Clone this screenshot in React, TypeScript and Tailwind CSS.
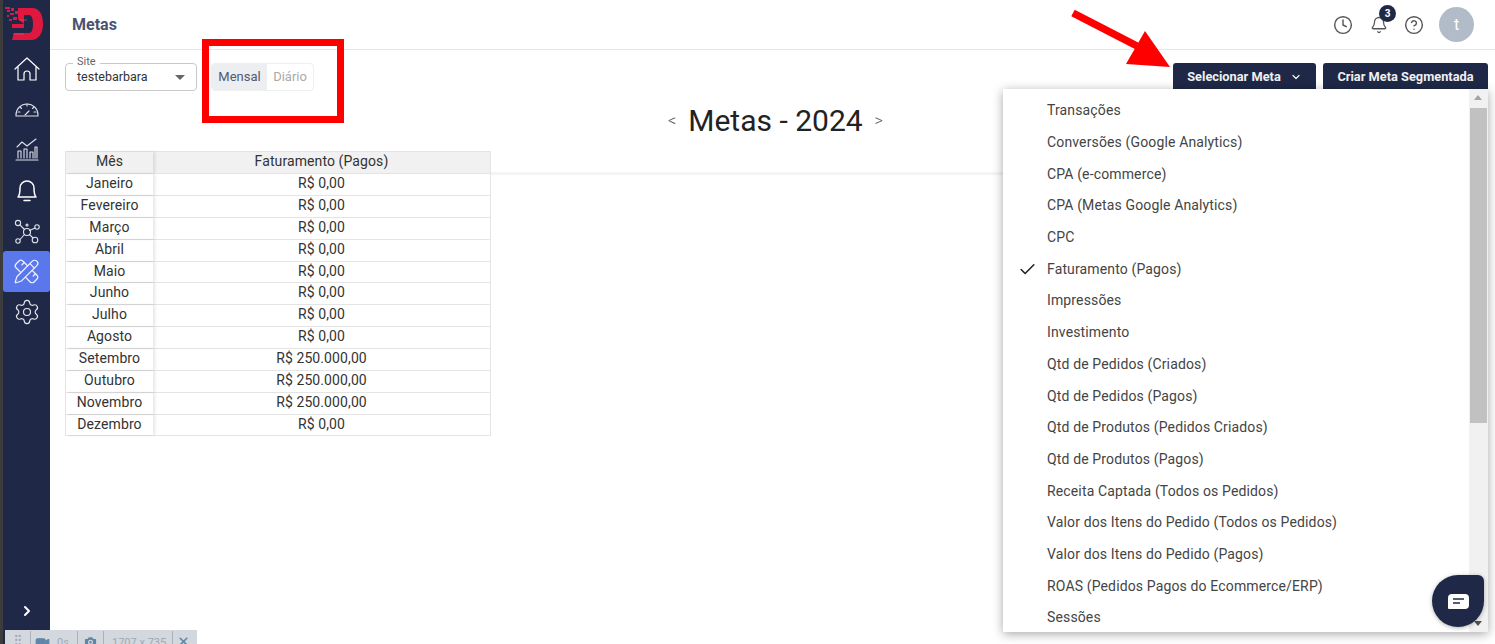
import { ChevronDown, ChevronRight, Check, Clock, Bell, CircleHelp, GripVertical, Video, Camera, X, PencilRuler, Settings } from "lucide-react";

const MONTHS: [string, string][] = [
  ["Janeiro", "R$ 0,00"],
  ["Fevereiro", "R$ 0,00"],
  ["Março", "R$ 0,00"],
  ["Abril", "R$ 0,00"],
  ["Maio", "R$ 0,00"],
  ["Junho", "R$ 0,00"],
  ["Julho", "R$ 0,00"],
  ["Agosto", "R$ 0,00"],
  ["Setembro", "R$ 250.000,00"],
  ["Outubro", "R$ 250.000,00"],
  ["Novembro", "R$ 250.000,00"],
  ["Dezembro", "R$ 0,00"],
];

const METAS = [
  "Transações",
  "Conversões (Google Analytics)",
  "CPA (e-commerce)",
  "CPA (Metas Google Analytics)",
  "CPC",
  "Faturamento (Pagos)",
  "Impressões",
  "Investimento",
  "Qtd de Pedidos (Criados)",
  "Qtd de Pedidos (Pagos)",
  "Qtd de Produtos (Pedidos Criados)",
  "Qtd de Produtos (Pagos)",
  "Receita Captada (Todos os Pedidos)",
  "Valor dos Itens do Pedido (Todos os Pedidos)",
  "Valor dos Itens do Pedido (Pagos)",
  "ROAS (Pedidos Pagos do Ecommerce/ERP)",
  "Sessões",
];

function Logo() {
  return (
    <svg width="47" height="47" viewBox="0 0 47 47">
      {/* viewBox is page x-3, so the D lands where the reference has it */}
      <path fillRule="evenodd" d="M15 8H29C36 8 40 14 40 24C40 34 35 40 28 40H9L11 33H21V24L15 19Z M21 15V33H26C29 33 30 29 30 24C30 19 29 15 26 15Z" fill="#e0183f" />
      <path d="M21 24H9V28H21Z" fill="#e0183f" />
      <path d="M10 34H21M24 20H16" stroke="#f0506f" strokeWidth=".6" />
      <g fill="#c8224e">
        <rect x="2" y="7" width="5" height="2" />
        <rect x="8" y="8" width="3" height="3" />
        <rect x="4" y="10" width="3" height="2" />
        <rect x="12" y="11" width="3" height="3" />
        <rect x="7" y="13" width="4" height="2" />
        <rect x="4" y="15" width="2" height="2" />
        <rect x="10" y="17" width="4" height="3" />
        <rect x="6" y="19" width="3" height="2" />
      </g>
    </svg>
  );
}

function NavIcon({ children, color = "#dfe2ea", width = 1.1 }: { children: React.ReactNode; color?: string; width?: number }) {
  return (
    <svg width="26" height="26" viewBox="0 0 26 26" fill="none" stroke={color} strokeWidth={width} strokeLinejoin="round" strokeLinecap="round">
      {children}
    </svg>
  );
}

function Sidebar() {
  return (
    <aside className="flex w-[47px] shrink-0 flex-col items-center bg-[#1f2947]">
      <div className="h-[47px]">
        <Logo />
      </div>
      <div className="flex h-[43px] w-full items-center justify-center">
        <NavIcon color="#fff" width={1.2}>
          <path d="M1 13 13 2l12 11" />
          <path d="M4 11v13h6v-6a3 3 0 0 1 6 0v6h6V11" />
        </NavIcon>
      </div>
      <div className="flex h-[40px] w-full items-center justify-center pb-[5px]">
        <NavIcon>
          <path d="M2 20a11 11 0 0 1 22 0v1H2Z" />
          <path d="M13 9v2M6 12l1.500 1.500M20 12l-1.500 1.500M4 17h2M20 17h2M11 20l4-4" />
        </NavIcon>
      </div>
      <div className="flex h-[41px] w-full items-center justify-center pb-[4px]">
        <NavIcon>
          <path d="M2 24h22M4 22v-7h3v7M10 22v-9h3v9M16 22v-6h3v6M21 22V11h2v11" />
          <path d="m3 11 5-5 5 4 9-7" />
        </NavIcon>
      </div>
      <div className="flex h-[41px] w-full items-center justify-center pb-[3px]">
        <NavIcon color="#fff" width={1.5}>
          <path d="M4 20c2-2 2-5 2-9a7 7 0 0 1 14 0c0 4 0 7 2 9Z" />
          <path d="M10 23.500h6" />
        </NavIcon>
      </div>
      <div className="flex h-[39px] w-full items-center justify-center">
        <NavIcon>
          <circle cx="13" cy="13" r="3.500" />
          <circle cx="4" cy="4" r="2.600" />
          <circle cx="13" cy="6" r="1" />
          <circle cx="23" cy="8" r="2.200" />
          <circle cx="4" cy="22" r="2.200" />
          <circle cx="21" cy="21" r="2.800" />
          <path d="m6 6 4.500 4.500M15.500 11.500 21 9M10.500 15.500 6 20.500M15.500 15.500l3.500 3.500" />
        </NavIcon>
      </div>
      <div className="flex h-[41px] w-[47px] items-center justify-center rounded-[3px] bg-[#5a78ec] text-[#eef1ff]">
        <PencilRuler size={27} strokeWidth={1.1} />
      </div>
      <div className="flex h-[40px] w-full items-center justify-center text-[#e6e8ee]">
        <Settings size={28} strokeWidth={1} />
      </div>
      <div className="mt-auto mb-[25px] text-white">
        <ChevronRight size={16} strokeWidth={3} />
      </div>
    </aside>
  );
}

function Header() {
  return (
    <header className="flex h-[50px] shrink-0 items-center justify-between border-b border-[#e6e6e6] pr-[21px] pl-[22px]">
      <h1 className="text-[16px] font-bold text-[#4b5372]">Metas</h1>
      <div className="flex items-center text-[#555]">
        <Clock size={20} strokeWidth={1.7} />
        <div className="relative ml-[17px]">
          <Bell size={18} strokeWidth={1.7} />
          <span className="absolute -top-[11px] left-[9px] flex h-[17px] w-[17px] items-center justify-center rounded-full bg-[#1f2947] text-[10px] font-bold text-white">3</span>
        </div>
        <CircleHelp size={20} strokeWidth={1.7} className="ml-[16px]" />
        <div className="ml-[15px] flex h-[35px] w-[35px] items-center justify-center rounded-full bg-[#b2bcc8] text-[16px] text-white">t</div>
      </div>
    </header>
  );
}

function Controls() {
  return (
    <div className="flex items-start justify-between pt-[13px] pr-[7px] pl-[15px]">
      <div className="flex items-start gap-[14px]">
        <div className="relative flex h-[28px] w-[132px] items-center justify-between rounded border border-[#c9c9c9] pr-[11px] pl-[11px] text-[12.500px] text-[#333]">
          <span className="absolute -top-[9px] left-[7px] bg-white px-[4px] text-[11px] leading-[14px] text-[#666]">Site</span>
          <span className="pt-[1px]">testebarbara</span>
          <span className="h-0 w-0 border-x-[5px] border-t-[5px] border-x-transparent border-t-[#666]" />
        </div>
        <div className="flex h-[28px] w-[103px] overflow-hidden rounded border border-[#eeeeee] text-[13px]">
          <span className="flex w-[55px] items-center justify-center bg-[#eceef1] text-[#515a70]">Mensal</span>
          <span className="flex flex-1 items-center justify-center text-[#aaa]">Diário</span>
        </div>
      </div>
      <div className="flex gap-[7px]">
        <button className="flex h-[26px] w-[143px] items-center justify-center gap-[9px] rounded-t-[3px] bg-[#1f2947] pt-[1px] text-[12.800px] font-bold text-[#f0f0f0]">
          Selecionar Meta
          <ChevronDown size={12} strokeWidth={2.5} />
        </button>
        <button className="h-[26px] w-[165px] rounded-t-[3px] bg-[#1f2947] pt-[1px] text-[12.800px] font-bold text-[#f0f0f0]">Criar Meta Segmentada</button>
      </div>
    </div>
  );
}

function MonthTable() {
  return (
    <div className="relative ml-[15px] w-[426px] text-[14px] tracking-[0.1px] text-[#333]">
      <div className="flex h-[22px] border border-b-0 border-[#e4e4e4] bg-[#f1f1f1] leading-[19px]">
        <div className="w-[87px] text-center shadow-[2px_0_3px_rgba(0,0,0,0.1)]">Mês</div>
        <div className="flex-1 text-center">Faturamento (Pagos)</div>
      </div>
      {MONTHS.map(([month, value]) => (
        <div key={month} className="flex h-[21.900px] border border-b-0 border-[#e4e4e4] leading-[19px] last:border-b">
          <div className="w-[87px] text-center shadow-[2px_0_3px_rgba(0,0,0,0.1)]">{month}</div>
          <div className="flex-1 text-center">{value}</div>
        </div>
      ))}
    </div>
  );
}

function MetaMenu() {
  return (
    <div className="absolute top-[89px] left-[1003px] z-10 flex h-[543px] w-[485px] overflow-hidden bg-white shadow-[0_2px_10px_rgba(0,0,0,0.35)]">
      <ul className="flex-1 pt-[6px] text-[14px] tracking-[0.14px] text-[#444]">
        {METAS.map((meta) => (
          <li key={meta} className="relative flex h-[31.700px] items-center pl-[44px]">
            {meta === "Faturamento (Pagos)" && <Check size={19} strokeWidth={2} className="absolute top-[7px] left-[15px] text-[#222]" />}
            {meta}
          </li>
        ))}
      </ul>
      <div className="relative w-[19px] bg-[#f1f1f1]">
        <span className="absolute top-[6px] left-[5px] h-0 w-0 border-x-[4px] border-b-[5px] border-x-transparent border-b-[#a3a3a3]" />
        <div className="absolute top-[19px] right-[1px] left-[1px] h-[315px] bg-[#c1c1c1]" />
        <span className="absolute bottom-[6px] left-[5px] h-0 w-0 border-x-[4px] border-t-[5px] border-x-transparent border-t-[#505050]" />
      </div>
    </div>
  );
}

function Annotations() {
  return (
    <>
      <div className="absolute top-[39px] left-[202px] h-[84px] w-[142px] border-[7px] border-[#ff0000]" />
      <svg className="absolute top-[8px] left-[1070px]" width="105" height="62" viewBox="0 0 105 62">
        <path d="M3 5 67 38" stroke="#ff0000" strokeWidth="7.500" />
        <path d="M75 23 100 59 56 56Z" fill="#ff0000" />
      </svg>
    </>
  );
}

function RecorderBar() {
  return (
    <div className="absolute bottom-0 left-[5px] z-20 flex h-[14px] w-[192px] items-start overflow-hidden whitespace-nowrap bg-[#d3d7de] text-[11px] leading-[14px] text-[#a0a9b5]">
      <GripVertical size={14} className="mt-[3px] ml-[6px] shrink-0" />
      <span className="mt-[1px] ml-[5px] h-[13px] w-px shrink-0 bg-[#aab1bb]" />
      <Video size={15} fill="#5f86a8" stroke="#5f86a8" className="mt-[5px] ml-[4px] shrink-0" />
      <span className="mt-[6px] ml-[7px] w-[11px] shrink-0">0s</span>
      <span className="mt-[1px] ml-[9px] h-[13px] w-px shrink-0 bg-[#aab1bb]" />
      <Camera size={15} fill="#5f86a8" stroke="#d3d7de" className="mt-[4px] ml-[5px] shrink-0" />
      <span className="mt-[1px] ml-[5px] h-[13px] w-px shrink-0 bg-[#aab1bb]" />
      <span className="mt-[6px] ml-[8px] w-[53px] shrink-0">1707 x 735</span>
      <span className="mt-[1px] ml-[7px] h-[13px] w-px shrink-0 bg-[#aab1bb]" />
      <X size={13} strokeWidth={3} className="mt-[5px] ml-[4px] shrink-0 text-[#5f86a8]" />
    </div>
  );
}

function ChatBubble() {
  return (
    <div className="absolute top-[575px] left-[1432px] z-20 flex h-[52px] w-[52px] items-center justify-center rounded-t-[26px] rounded-br-[26px] rounded-bl-[26px] rounded-tr-[6px] bg-[#1f2947] shadow-[0_1px_4px_rgba(0,0,0,0.3)]">
      <svg width="21" height="15" viewBox="0 0 21 15">
        <path d="M4 0h13a4 4 0 0 1 4 4v7a4 4 0 0 1-4 4H1a1 1 0 0 1-1-1V4a4 4 0 0 1 4-4Z" fill="#fff" />
        <path d="M5 5h11M5 9h7" stroke="#1f2947" strokeWidth="1.600" />
      </svg>
    </div>
  );
}

export default function App() {
  return (
    <div className="relative flex h-[644px] w-[1495px] overflow-hidden bg-white font-['Roboto',sans-serif]">
      <div className="w-[3px] shrink-0 bg-[#3c3c3c]" />
      <Sidebar />
      <main className="min-w-0 flex-1">
        <Header />
        <Controls />
        <div className="mt-[3px] mb-[3px] flex h-[54px] items-center justify-center gap-[12px] pl-[6px] text-[#222]">
          <span className="text-[16px] font-light text-[#555]">&lt;</span>
          <h2 className="text-[30px] leading-[36px]">Metas - 2024</h2>
          <span className="text-[16px] font-light text-[#555]">&gt;</span>
        </div>
        <MonthTable />
      </main>
      <div className="absolute top-[172px] left-[491px] h-[3px] w-[512px] bg-[#f4f4f4]" />
      <MetaMenu />
      <Annotations />
      <RecorderBar />
      <ChatBubble />
    </div>
  );
}
